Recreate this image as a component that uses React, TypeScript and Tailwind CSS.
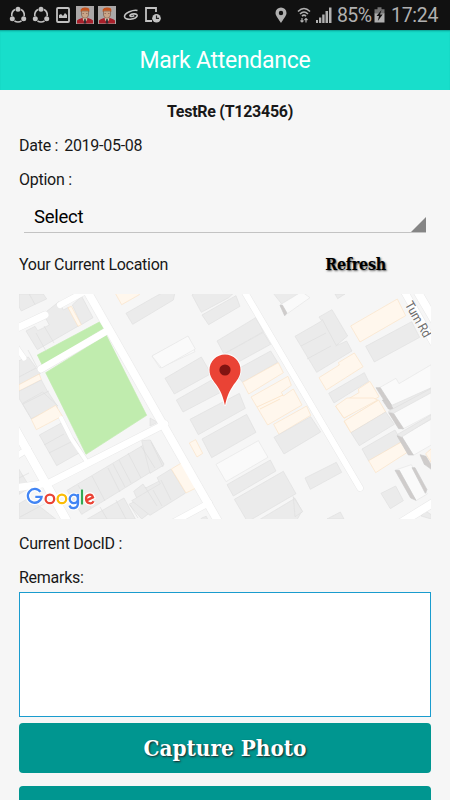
import React from "react";

type Tone = "gray" | "cream" | "pale" | "dark" | "lawn" | "road";
const tones: Record<Tone, [string, string]> = {
  gray: ["#ebebeb", "#dfdfdf"],
  cream: ["#fff7ed", "#fbe3c6"],
  pale: ["#fafafa", "#e6e6e6"],
  dark: ["#cfcccb", "#cacaca"],
  lawn: ["#c0ecae", "#c0ecae"],
  road: ["#ffffff", "#ffffff"],
};

/* Each tile covers 150px of the map and is drawn at three times its size. */
function Tile({ x, y, shapes }: { x: number; y: number; shapes: [Tone, string][] }) {
  return (
    <g transform={`translate(${x} ${y}) scale(0.33333)`}>
      {shapes.map(([tone, points], i) => (
        <polygon key={i} points={points} fill={tones[tone][0]} stroke={tones[tone][1]} strokeWidth="2" />
      ))}
    </g>
  );
}

const roads: [string, number][] = [
  ["M86.5 290L219 523", 8],
  ["M243.500 290L360 488", 6.2],
  ["M403.500 290L433 342", 7],
  ["M416.500 290L440 330", 8],
  ["M41 369L106 331.500", 7],
  ["M15 488L49 483L165 424", 7],
  ["M14 427L68 523", 8.5],
  ["M15 457L28 449", 6],
  ["M61 418L71 438L87 462", 4],
  ["M17 328L45 315", 7],
  ["M60 305L84 292", 6],
  ["M15 345L24 358", 5],
  ["M172 523L209 503", 6],
  ["M399 524L436 501", 8],
];

const northWest: [Tone, string][] = [
  ["gray", "27,27 58,27 75,58 34,78 27,65"],
  ["gray", "58,27 100,27 110,42 75,58"],
  ["gray", "48,138 75,124 83,137 118,120 100,87 147,50 160,75 175,67 207,122 82,194"],
  ["gray", "187,60 215,34 249,98 214,119"],
  ["cream", "174,68 184,64 214,119 204,124"],
  ["lawn", "82,210 268,111 280,130 97,241"],
  ["lawn", "107,263 289,151 410,391 228,508 148,345"],
  ["gray", "27,227 55,216 91,266 27,300"],
  ["cream", "27,299 88,267 94,284 27,318"],
  ["gray", "27,319 94,285 112,318 140,360 143,373 64,402 27,340"],
  ["cream", "316,25 388,25 388,29 335,59"],
  ["gray", "348,85 430,38 500,0 490,45 368,118"],
  ["pale", "426,213 535,155 555,200 450,249"],
];

const northCenter: [Tone, string][] = [
  ["gray", "126,30 132,25 250,25 236,38 154,82"],
  ["gray", "156,90 258,32 270,64 176,119"],
  ["gray", "201,168 317,98 340,140 222,207"],
  ["gray", "222,207 340,142 362,178 245,242 230,230"],
  ["pale", "6,213 114,153 136,192 35,249"],
  ["gray", "45,280 154,216 183,266 73,327"],
  ["gray", "79,345 185,285 212,322 99,381"],
  ["gray", "250,259 362,198 383,232 278,292"],
  ["cream", "278,292 385,233 400,263 296,327"],
  ["cream", "303,336 414,274 424,301 394,322 400,333 430,312 456,360 353,420"],
  ["gray", "370,25 450,25 395,57"],
  ["pale", "390,60 455,20 480,38 405,91"],
  ["dark", "390,61 397,60 411,84 404,92"],
];

const northEast: [Tone, string][] = [
  ["gray", "120,27 150,27 128,41"],
  ["gray", "0,154 80,108 72,96 111,74 158,153 122,183 155,168 171,198 65,262"],
  ["cream", "167,123 307,42 332,92 195,171"],
  ["gray", "212,184 350,110 374,157 238,231"],
  ["cream", "72,278 133,240 130,233 178,204 204,245 94,315"],
  ["gray", "101,325 208,263 221,289 117,354"],
  ["cream", "122,364 192,323 190,312 225,289 252,335 147,400"],
  ["cream", "147,409 248,347 270,380 168,443"],
  ["pale", "250,310 303,280 312,296 409,239 409,310 286,370"],
  ["dark", "243,308 256,308 298,373 284,373"],
  ["gray", "282,365 409,308 409,317 291,373"],
];

const southWest: [Tone, string][] = [
  ["gray", "37,10 98,-24 143,17 64,56"],
  ["cream", "64,58 137,16 157,48 79,89"],
  ["gray", "88,105 154,69 180,121 193,116 216,154 140,197"],
  ["gray", "27,208 60,262 27,283"],
  ["gray", "27,311 57,294 137,357 27,357"],
  ["gray", "171,271 421,123 462,192 215,343"],
  ["gray", "232,357 342,294 376,357"],
  ["gray", "357,313 383,300 371,274 399,252 407,264 450,242 490,285 395,357"],
];

const southCenter: [Tone, string][] = [
  ["gray", "120,58 268,-20 286,25 145,104"],
  ["gray", "156,117 290,43 318,97 185,173"],
  ["pale", "198,193 325,122 354,172 228,245"],
  ["gray", "231,254 361,180 378,213 250,288"],
  ["gray", "253,298 400,214 438,281 300,361 290,361"],
  ["gray", "325,361 435,295 456,333 440,361"],
  ["cream", "118,129 137,119 158,160 141,171"],
  ["gray", "-25,122 1,120 42,195 0,220"],
  ["gray", "0,54 23,67 0,78"],
  ["gray", "-55,302 31,251 21,233 63,207 107,279 0,346"],
  ["cream", "64,207 96,188 140,263 108,279"],
  ["cream", "371,73 470,18 482,46 387,103"],
  ["gray", "372,112 482,50 512,96 402,162"],
  ["gray", "155,354 169,349 174,360 150,360"],
];

const southEast: [Tone, string][] = [
  ["cream", "122,18 156,-6 235,-6 248,0 147,54"],
  ["cream", "148,63 251,0 272,36 168,98"],
  ["gray", "168,98 272,36 298,73 193,137"],
  ["gray", "201,147 300,90 320,126 221,183"],
  ["cream", "221,182 319,126 337,157 242,218"],
  ["gray", "30,234 124,187 140,217 46,268"],
  ["gray", "258,280 302,258 325,302 286,326"],
  ["gray", "96,357 136,336 147,357"],
  ["gray", "-5,290 23,335 0,350"],
  ["pale", "292,33 409,-30 409,42 322,88"],
  ["pale", "317,109 409,58 409,135 355,166"],
  ["dark", "262,0 279,0 295,27 280,27"],
  ["dark", "281,38 294,38 326,86 311,86"],
  ["dark", "306,107 320,109 355,165 340,165"],
  ["gray", "280,34 409,-35 409,-22 295,40"],
  ["gray", "306,104 409,44 409,56 320,111"],
  ["pale", "302,210 349,194 397,282 363,302"],
  ["dark", "300,211 313,211 363,301 347,294"],
  ["dark", "351,203 360,203 396,269 391,280"],
  ["dark", "375,164 393,169 409,196 409,208 388,193"],
  ["cream", "392,161 409,146 409,188"],
  ["gray", "378,348 392,334 409,344 409,357"],
];

const graySeams =
  "M36 333l10 18M44 326l10 17M19 377l17-9M23 404l26-13M44 445l20-11M49 453l22-11M78 485l13 23M92 476l13 25M108 468l12 24M113 464l12 23M119 460l12 23M128 453l13 25M141 446l14 22M28 350l10 19M100 507l7 12M116 500l10 19M130 505l8 13M145 487l12 19M19 478l10-5M20 517l28-15M151 442l12 25M153 490l9 16M161 480l10 20M301 346l25-13M307 359l24-13M322 319l14 26";
const creamSeams = "M257 407L283 395M260 409L280 399";

function Map() {
  return (
    <svg className="block h-[225px] w-[412px] shrink-0" viewBox="19 294 412 225">
      <rect x="19" y="294" width="412" height="225" fill="#f6f6f6" />
      {roads.map(([d, w]) => (
        <path key={d} d={d} fill="none" stroke="#e9e9e9" strokeWidth={w + 1} strokeLinecap="round" />
      ))}
      <Tile x={10} y={285} shapes={northWest} />
      <Tile x={150} y={285} shapes={northCenter} />
      <Tile x={295} y={285} shapes={northEast} />
      <Tile x={10} y={400} shapes={southWest} />
      <Tile x={150} y={400} shapes={southCenter} />
      <Tile x={295} y={400} shapes={southEast} />
      <path d={graySeams} fill="none" stroke="#dcdcdc" strokeWidth=".6" />
      <path d={creamSeams} fill="none" stroke="#fbe0c0" strokeWidth=".7" />
      {roads.map(([d, w]) => (
        <path key={d} d={d} fill="none" stroke="#fff" strokeWidth={w} strokeLinecap="round" />
      ))}
      <text
        transform="translate(404.500 304.500) rotate(60)"
        className="font-['Roboto']"
        fontSize="13"
        fill="#6e6e6e"
        stroke="#fff"
        strokeWidth="1.2"
        paintOrder="stroke"
        textLength="39"
        lengthAdjust="spacingAndGlyphs"
      >
        Tum Rd
      </text>
      <path
        d="M225 405.500C223.200 398 222 393 217.500 386.500C213.500 380.500 209.500 377 209.500 370A15.500 15.500 0 0 1 240.500 370C240.500 377 236.500 380.500 232.500 386.500C228 393 226.800 398 225 405.500Z"
        fill="#ea4335"
        stroke="#fff"
        strokeWidth="2"
        paintOrder="stroke"
      />
      <circle cx="225" cy="370" r="5.600" fill="#811411" />
      <g fill="none" stroke="#fff" strokeWidth="4.600">
        <GoogleStrokes />
      </g>
      <g fill="none" strokeWidth="2.300">
        <GoogleStrokes colored />
      </g>
    </svg>
  );
}

function GoogleStrokes({ colored = false }: { colored?: boolean }) {
  const c = (hex: string) => (colored ? hex : undefined);
  return (
    <>
      <path stroke={c("#4285f4")} d="M40.400 491.800A6.900 6.900 0 1 0 41.600 496.900H35.300" />
      <circle stroke={c("#ea4335")} cx="49.900" cy="498.900" r="4.300" />
      <circle stroke={c("#fbbc05")} cx="61.900" cy="498.900" r="4.300" />
      <path stroke={c("#4285f4")} d="M77.900 498.900A4.100 4.200 0 1 1 69.700 498.900A4.100 4.200 0 1 1 77.900 498.900M78 494V503C78 509 71 509.500 69.500 505.500" />
      <path stroke={c("#34a853")} d="M82 489.500V504.500" />
      <path stroke={c("#ea4335")} d="M86 500.600L93 497.300C91.500 493 85.800 494.500 86 499C86.300 504 91.800 504.500 93.600 501.200" />
    </>
  );
}

function ShareIcon() {
  return (
    <svg className="h-[18px] w-[18px]" viewBox="0 0 18 18" fill="none" stroke="#c2c2c2" strokeWidth="1.600">
      <path d="M6 3.500A6.500 6.500 0 0 0 2.800 10M12 3.500A6.500 6.500 0 0 1 15.200 10M5.500 15A7 7 0 0 0 12.500 15" />
      <g fill="#c2c2c2" stroke="none">
        <circle cx="9" cy="3.300" r="2.500" />
        <circle cx="3.300" cy="12.800" r="2.500" />
        <circle cx="14.700" cy="12.800" r="2.500" />
      </g>
    </svg>
  );
}

function AvatarIcon() {
  return (
    <svg className="h-[18px] w-[18px]" viewBox="0 0 18 18">
      <path fill="#aaa7a7" d="M0 0h18v18H0z" />
      <path fill="#a8202b" d="M1 17.500V14.500Q2 13 6 12H12Q16 13 17 14.500V17.500Z" />
      <path fill="#d5c5ae" d="M6.500 11H11.500L11 14L9 17L7 14Z" />
      <path fill="#302b32" d="M8.300 13h1.400l.6 4.500H7.700Z" />
      <path fill="#c8a487" stroke="#6b4d3e" strokeWidth=".6" d="M5.500 5H12.500V9Q12 12.300 9 12.300Q6 12.300 5.500 9Z" />
      <path fill="#c6541d" d="M4.700 6V3.500Q6 1.200 9 1.400Q13 1.200 13.300 3.500V6L12 4.800H6Z" />
      <path stroke="#8b6552" strokeWidth=".8" d="M6.500 7.500h1.500M10 7.500h1.500" />
    </svg>
  );
}

function StatusBar() {
  return (
    <header className="flex h-[30px] shrink-0 items-center bg-[#111] pl-[9px] pr-[11px] text-[#b0b0b0]">
      <div className="flex items-center gap-[4.500px]">
        <ShareIcon />
        <ShareIcon />
        <svg className="ml-px h-[18px] w-[16px]" viewBox="0 0 16 18">
          <rect x="2" y="2" width="12" height="14" rx="1" fill="none" stroke="#c2c2c2" strokeWidth="1.800" />
          <path d="M4 12V9l2-1 2 2 2-3 2 2v3Z" fill="#c2c2c2" />
        </svg>
        <AvatarIcon />
        <AvatarIcon />
        <svg className="ml-px h-[18px] w-[18px]" viewBox="0 0 18 18" fill="none" stroke="#c2c2c2" strokeWidth="1.600">
          <path d="M15.500 4.500C11 3.500 2.500 7 2.500 10.500C2.500 15 14 13.500 15.200 9.800C15.500 7.500 10.500 7.200 8.200 9C6.800 10.400 10 11.300 12.300 9.600" />
        </svg>
        <svg className="h-[18px] w-[18px]" viewBox="0 0 18 18">
          <path d="M12 6V2H2V15H8" fill="none" stroke="#c2c2c2" strokeWidth="1.800" />
          <path d="M2 14h6v2H2z" fill="#c2c2c2" />
          <circle cx="12.500" cy="12.200" r="4.300" fill="#c2c2c2" />
          <path d="M12.500 9.500V12.400H15" fill="none" stroke="#222" strokeWidth="1.200" />
        </svg>
      </div>
      <div className="ml-auto flex items-center font-['Roboto'] text-[19.500px] leading-[30px]">
        <svg className="h-[18px] w-[12px]" viewBox="0 0 12 18">
          <path fillRule="evenodd" fill="#b0b0b0" d="M6 17C4 13.500.5 10 .5 7A5.500 5.500 0 0 1 11.500 7C11.500 10 8 13.500 6 17ZM6 4.800A2.200 2.200 0 1 0 6 9.200A2.200 2.200 0 1 0 6 4.800Z" />
        </svg>
        <svg className="ml-[10px] h-[18px] w-[14px]" viewBox="0 0 14 18" fill="none" stroke="#b0b0b0" strokeWidth="1.600">
          <path d="M1 5.500Q7-.5 13 5.500M3 8Q7 4 11 8M5 10.300Q7 8 9 10.300" />
          <path d="M5 12v4M3.500 14.500L5 16l1.500-1.500M9 16.500v-4M7.500 14L9 12.500l1.500 1.500" strokeWidth="1.200" />
        </svg>
        <svg className="ml-[5px] h-[18px] w-[16px]" viewBox="0 0 16 18" fill="#b0b0b0">
          <path d="M0 14h2v3H0zM3 11.500h2.300V17H3zM6.200 8.500h2.400V17H6.200zM9.500 5h2.500v12H9.500zM13 1.500h2.500V17H13z" />
        </svg>
        <span className="ml-[5px] w-[36px] pt-[2px] tracking-[-0.600px]">85%</span>
        <svg className="ml-px h-[18px] w-[11px]" viewBox="0 0 11 18">
          <path fill="#737373" d="M3.500 1.200h4v2H10.500V8H.5V3.200h3Z" />
          <path fill="#b0b0b0" d="M.5 7.500h10v9H.5z" />
          <path fill="#111" d="M7.500 4L2.500 10H5L3.800 15L8.700 8.500H6Z" />
        </svg>
        <span className="ml-[6px] w-[48px] pt-[2px] tracking-[-0.300px]">17:24</span>
      </div>
    </header>
  );
}

export default function App() {
  return (
    <div className="flex h-[800px] w-[450px] flex-col overflow-hidden bg-[#f6f6f6] font-['Roboto',sans-serif] text-[16px] tracking-[-0.270px] text-[#181818]">
      <StatusBar />
      <div className="flex h-[60px] shrink-0 items-center justify-center bg-[#18decb] pt-[3px] text-[23px] text-white shadow-[inset_0_2px_2px_-1px_#0a9e91]">
        Mark Attendance
      </div>
      <main className="flex flex-col px-[19px]">
        <h1 className="mt-[11px] pl-[10px] text-center text-[16px] leading-[22px] font-bold">TestRe (T123456)</h1>
        <div className="mt-[12px] flex gap-[6px] leading-[22px]">
          <span>Date :</span>
          <span>2019-05-08</span>
        </div>
        <div className="mt-[12px] leading-[22px]">Option :</div>
        <div className="mt-[11px] ml-[5px] flex h-[31px] w-[402px] items-end justify-between border-b border-[#c3c3c3] text-black">
          <span className="pb-[2px] pl-[10px] text-[18.500px] leading-[26px]">Select</span>
          <svg className="h-[15px] w-[15px]" viewBox="0 0 15 15"><path d="M15 0V15H0Z" fill="#858585" /></svg>
        </div>
        <div className="mt-[21px] flex justify-between leading-[22px]">
          <span>Your Current Location</span>
          <span className="mr-[45px] font-['DejaVu_Serif_Condensed','DejaVu_Serif',serif] text-[16px] font-bold text-black [text-shadow:1px_1px_2px_#555]">Refresh</span>
        </div>
        <div className="mt-[18px]"><Map /></div>
        <div className="mt-[14px] leading-[22px]">Current DocID :</div>
        <div className="mt-[12px] leading-[22px]">Remarks:</div>
        <textarea className="mt-[3px] block h-[125px] w-full resize-none border border-[#1a9cce] bg-white p-2 outline-none" />
        <button className="mt-[6px] h-[50px] rounded-[4px] bg-[#009690] pt-[2px] font-['DejaVu_Serif_Condensed','DejaVu_Serif',serif] text-[22.300px] font-bold tracking-normal text-white [text-shadow:1px_1px_2px_#222]">Capture Photo</button>
        <button className="mt-[13px] h-[50px] rounded-[4px] bg-[#009690]" />
      </main>
    </div>
  );
}
